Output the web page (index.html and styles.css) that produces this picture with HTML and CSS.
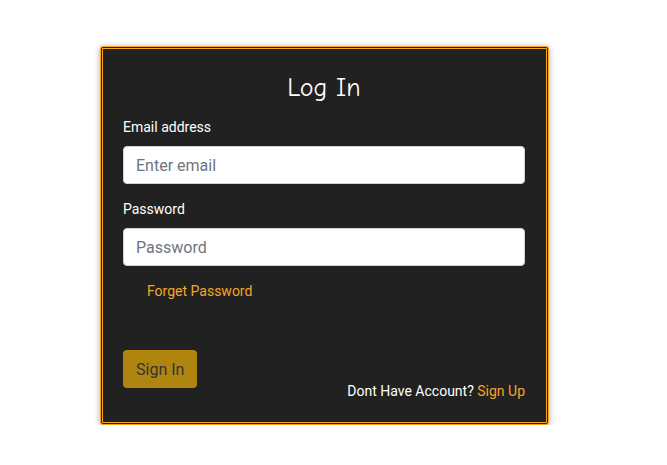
FILE: index.html
```html
<!DOCTYPE html>
<html lang="en">
<head>
<meta charset="utf-8">
<title>Log In</title>
<link rel="stylesheet" href="styles.css">
</head>
<body>
<div class="page">
  <form class="card">
    <h2 class="title">Log In</h2>
    <div class="group">
      <label class="label">Email address</label>
      <input class="control" type="email" placeholder="Enter email">
    </div>
    <div class="group">
      <label class="label">Password</label>
      <input class="control" type="password" placeholder="Password">
    </div>
    <a class="forget">Forget Password</a>
    <div class="actions">
      <button class="btn" type="button">Sign In</button>
      <p class="signup">Dont Have Account? <a class="link">Sign Up</a></p>
    </div>
  </form>
</div>
</body>
</html>
```

FILE: styles.css
```css
* { box-sizing: border-box; }
html, body { margin: 0; padding: 0; background: #fff; }
body { font-family: Roboto, "Liberation Sans", sans-serif; }
.page {
  display: flex;
  justify-content: flex-start;
  padding: 46px 0 0 100px;
}
.card {
  width: 449px;
  height: 379px;
  background: #212121;
  border: 1px solid #f5a623;
  border-radius: 3px;
  box-shadow: inset 0 0 0 1px #212121, inset 0 0 0 2px #f5a623, 0 1px 6px rgba(0,0,0,0.35);
  padding: 25px 23px 22px 22px;
  display: flex;
  flex-direction: column;
}
.title {
  margin: 0 0 13px 0;
  text-align: center;
  color: #fff;
  font-family: "Comic Sans MS", "Comic Neue", "Open Sans", sans-serif;
  font-weight: 400;
  font-size: 26px;
  line-height: 32px;
}
.group { display: flex; flex-direction: column; margin-bottom: 15px; }
.label {
  color: #fff;
  font-size: 14px;
  line-height: 21px;
  margin-bottom: 8px;
}
.control {
  height: 38px;
  width: 100%;
  border: 1px solid #ced4da;
  border-radius: 4px;
  padding: 6px 12px;
  font-family: Roboto, "Liberation Sans", sans-serif;
  font-size: 16px;
  background: #fff;
  outline: none;
}
.control::placeholder { color: #6c757d; }
.forget {
  color: #f5a623;
  font-size: 14px;
  line-height: 21px;
  margin-left: 24px;
  margin-top: 0;
}
.actions {
  margin-top: auto;
  display: flex;
  justify-content: space-between;
  align-items: flex-end;
}
.btn {
  height: 38px;
  padding: 0 13px;
  border: none;
  border-radius: 4px;
  background: #b0850f;
  color: #333;
  font-family: Roboto, "Liberation Sans", sans-serif;
  font-size: 16px;
  margin-bottom: 14px;
}
.signup {
  margin: 0;
  color: #fff;
  font-size: 14px;
  line-height: 21px;
}
.link { color: #f5a623; }
```
